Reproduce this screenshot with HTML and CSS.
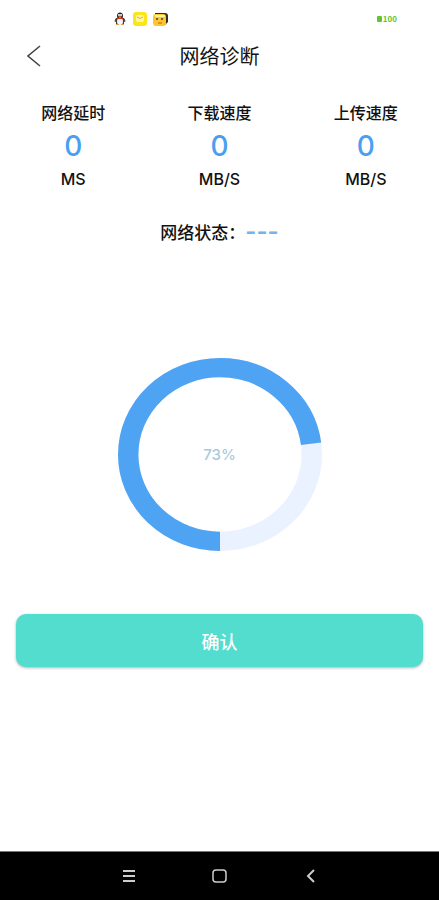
FILE: index.html
```html
<!DOCTYPE html>
<html lang="zh-CN">
<head>
    <meta charset="UTF-8">
    <meta name="viewport" content="width=device-width, initial-scale=1.0">
    <title>网络诊断</title>
    <link rel="stylesheet" href="styles.css">
</head>
<body>

<div class="status-bar">
    <div class="notifications">
        <svg width="14" height="14" viewBox="0 0 14 14" aria-hidden="true">
            <path d="M3 6C2 8 1 9 2 10L3 9.500V12H11V9.500L12 10C13 9 12 8 11 6Z" fill="#463b3d"/>
            <ellipse cx="7" cy="4" rx="3" ry="3.500" fill="#292526"/>
            <ellipse cx="7" cy="9.500" rx="3" ry="3.500" fill="#f4f4f6"/>
            <circle cx="6" cy="3" r="1" fill="#fff"/>
            <circle cx="8" cy="3" r="1" fill="#fff"/>
            <path d="M4 5.500H10V7H4Z" fill="#d92c26"/>
            <path d="M5 4.500H9L7 6Z" fill="#f2b134"/>
            <path d="M3 12H6V13H3ZM8 12H11V13H8Z" fill="#d9a441"/>
        </svg>
        <svg width="14" height="14" viewBox="0 0 14 14" aria-hidden="true">
            <rect width="14" height="14" rx="3" fill="#fae619"/>
            <rect x="3" y="3" width="8" height="7" rx="2" fill="#fff7a5"/>
            <path d="M4 5Q7 8 10 5" fill="none" stroke="#e2b80e"/>
        </svg>
        <svg width="16" height="14" viewBox="0 0 16 14" aria-hidden="true">
            <path d="M2 1H12Q15 1 15 4V10L12 13L2 5Z" fill="#3a3020"/>
            <rect x="0" y="2" width="13" height="12" rx="3" fill="#fbc72c"/>
            <path d="M2 3H12V5H2Z" fill="#fff0a0"/>
            <circle cx="4" cy="7" r="1" fill="#51401c"/>
            <circle cx="9" cy="7" r="1" fill="#51401c"/>
            <path d="M5 10H9V12H5Z" fill="#ee8b2b"/>
        </svg>
    </div>
    <div class="battery">
        <svg width="5" height="6" viewBox="0 0 5 6" aria-hidden="true">
            <rect width="5" height="6" rx="1" fill="#62c62c"/>
        </svg>
        <span>100</span>
    </div>
</div>

<header class="header">
    <a class="back" href="#" aria-label="返回">
        <svg width="14" height="22" viewBox="0 0 14 22" aria-hidden="true">
            <path d="M13 1L1 11L13 21" fill="none" stroke="#444" stroke-width="1.500"/>
        </svg>
    </a>
    <h1>网络诊断</h1>
</header>

<main class="content">
    <section class="metrics">
        <div class="metric">
            <h2>网络延时</h2>
            <p class="value">0</p>
            <p class="unit">MS</p>
        </div>
        <div class="metric">
            <h2>下载速度</h2>
            <p class="value">0</p>
            <p class="unit">MB/S</p>
        </div>
        <div class="metric">
            <h2>上传速度</h2>
            <p class="value">0</p>
            <p class="unit">MB/S</p>
        </div>
    </section>

    <p class="network-state">网络状态：<span>---</span></p>

    <div class="progress">
        <svg class="ring" viewBox="0 0 200 200" preserveAspectRatio="none" aria-hidden="true">
            <circle class="track" cx="100" cy="100" r="90"/>
            <circle class="bar" cx="100" cy="100" r="90" pathLength="100" transform="rotate(90 100 100)"/>
        </svg>
        <span class="percent">73%</span>
    </div>

    <button class="confirm" type="button">确认</button>
</main>

<nav class="nav-bar">
    <button type="button" aria-label="菜单">
        <svg width="14" height="14" viewBox="0 0 14 14" aria-hidden="true">
            <path d="M1 2H13M1 7H13M1 12H13" stroke-width="2"/>
        </svg>
    </button>
    <button type="button" aria-label="主页">
        <svg width="16" height="14" viewBox="0 0 16 14" aria-hidden="true">
            <rect x="2" y="1" width="13" height="12" rx="3" stroke-width="1.500"/>
        </svg>
    </button>
    <button type="button" aria-label="返回">
        <svg width="14" height="14" viewBox="0 0 14 14" aria-hidden="true">
            <path d="M11 1L5 7L11 13" stroke-width="2"/>
        </svg>
    </button>
</nav>

</body>
</html>
```
FILE: styles.css
```css
* {
    box-sizing: border-box;
}
body {
    margin: 0;
    min-height: 100vh;
    display: flex;
    flex-direction: column;
    font-family: "Noto Sans CJK SC", sans-serif;
    background-color: #fff;
    color: #111;
}
h1, h2, p {
    margin: 0;
}
svg {
    display: block;
}
.status-bar {
    height: 36px;
    padding: 2px 42px 0 113px;
    display: flex;
    align-items: center;
    justify-content: space-between;
}
.notifications {
    display: flex;
    gap: 6px;
}
.battery {
    display: flex;
    align-items: center;
    gap: 1px;
    font-size: 8px;
    line-height: 8px;
    font-weight: bold;
    color: #62c62c;
}
.header {
    height: 40px;
    padding: 0 27px;
    display: grid;
    grid-template-columns: 14px 1fr 14px;
    align-items: center;
}
.header h1 {
    font-size: 20px;
    line-height: 40px;
    font-weight: 400;
    text-align: center;
}
.content {
    display: flex;
    flex-direction: column;
    padding: 24px 16px;
}
.metrics {
    display: grid;
    grid-template-columns: repeat(3, 1fr);
    margin: 0 -16px;
    text-align: center;
}
.metric h2 {
    font-size: 16px;
    line-height: 24px;
    font-weight: 500;
}
.value {
    font-family: Inter, sans-serif;
    font-size: 28px;
    line-height: 44px;
    font-weight: 500;
    color: #4a9ff0;
}
.unit {
    font-family: Inter, sans-serif;
    font-size: 16px;
    line-height: 22px;
    font-weight: 500;
}
.network-state {
    margin-top: 28px;
    display: flex;
    justify-content: center;
    font-size: 17px;
    line-height: 28px;
    font-weight: 500;
}
.network-state span {
    font-family: Inter, sans-serif;
    font-size: 24px;
    font-weight: 600;
    color: #76b3e8;
}
.progress {
    margin-top: 112px;
    display: grid;
    place-items: center;
}
.ring,
.percent {
    grid-area: 1 / 1;
}
.ring {
    width: 204px;
    height: 193px;
}
.ring circle {
    fill: none;
    stroke-width: 20;
}
.ring .track {
    stroke: #eaf2ff;
}
.ring .bar {
    stroke: #4fa3f3;
    stroke-dasharray: 73 100;
}
.percent {
    font-family: Inter, sans-serif;
    font-size: 15px;
    font-weight: 500;
    color: #a9cbdc;
}
.confirm {
    margin-top: 63px;
    height: 53px;
    border: none;
    border-radius: 10px;
    background-color: #53ddcf;
    box-shadow: 0 1px 3px rgba(0, 0, 0, 0.3);
    color: #fff;
    font-family: inherit;
    font-size: 18px;
    font-weight: 500;
    cursor: pointer;
}
.nav-bar {
    height: 49px;
    margin-top: auto;
    padding: 0 84px;
    border-top: 1px solid #777;
    background-color: #000;
    display: flex;
    align-items: center;
    justify-content: space-around;
}
.nav-bar button {
    padding: 0;
    border: none;
    background: none;
    cursor: pointer;
}
.nav-bar svg {
    fill: none;
    stroke: #ccc;
}
```
